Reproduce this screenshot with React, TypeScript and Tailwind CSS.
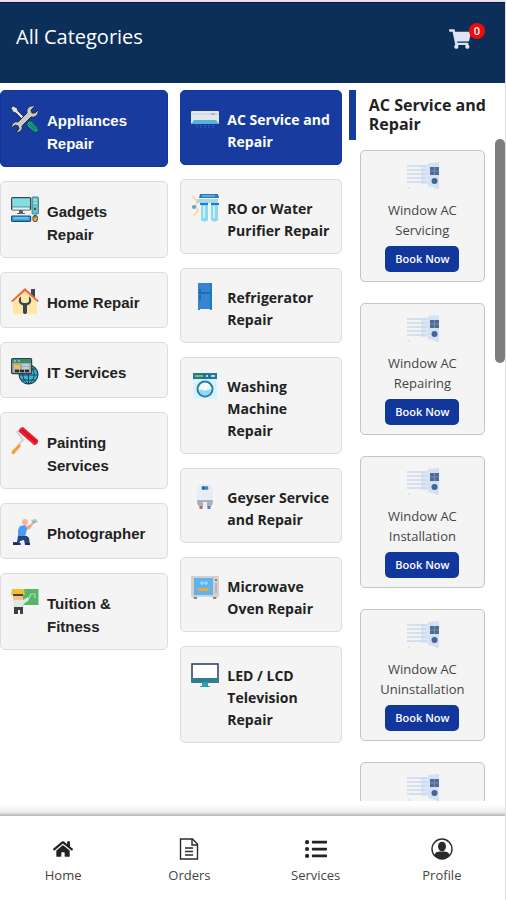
import React, { useState } from 'react';
import { FaHome, FaListUl, FaShoppingCart } from 'react-icons/fa';

interface Category {
    id: string;
    name: string;
    icon: React.ReactNode;
}

const iconClass = 'w-7 h-7 shrink-0';

const ToolsIcon = () => (
    <svg viewBox="0 0 28 28" className={iconClass} aria-hidden="true">
        <path d="M2 1l4 2 1 3 10 10-2 2L5 8 2 7 0 3z" fill="#dfe3e8" stroke="#222c3c" strokeWidth="0.8" />
        <path d="M16 18l2-2 3 0 6 7c1 3-1 5-4 4l-7-6z" fill="#149c86" stroke="#123d4c" strokeWidth="0.8" />
        <path d="M19 19l5 6M21 18l5 6" stroke="#0b5d5c" strokeWidth="0.8" />
        <path d="M24 1l-4 4 1 3 3 0 3-3c1 4-2 8-7 7L11 21c1 4-2 7-6 6l3-3-1-3-3-1-3 3c-1-4 2-7 6-6l9-9c-1-5 3-8 8-7z" fill="#c9c9cc" stroke="#222c3c" strokeWidth="1" />
    </svg>
);

const ComputerIcon = () => (
    <svg viewBox="0 0 28 28" className={iconClass} aria-hidden="true">
        <rect x="0.6" y="1.6" width="19" height="12" rx="1" fill="#7fe0e2" stroke="#344955" strokeWidth="1.2" />
        <path d="M1 11h18v3H1z" fill="#e7f2f4" stroke="#344955" strokeWidth="0.6" />
        <path d="M8 14h4v3h2v1H6v-1h2z" fill="#54656f" />
        <rect x="21" y="1" width="6.4" height="17" rx="0.8" fill="#64c5ca" stroke="#4b6c75" strokeWidth="0.9" />
        <path d="M22.5 4h3.5M22.5 7h3.5" stroke="#d6fbfb" strokeWidth="1.2" />
        <circle cx="24" cy="13" r="1.2" fill="#28566a" />
        <rect x="0.6" y="20" width="19" height="5.4" rx="0.8" fill="#36a9e8" stroke="#244966" strokeWidth="1.2" />
        <path d="M3 22h14" stroke="#8fd6fb" strokeWidth="1" />
        <ellipse cx="24.2" cy="22.5" rx="2.4" ry="3.2" fill="#efb321" stroke="#38424c" strokeWidth="1" />
        <path d="M24 19v3" stroke="#38424c" strokeWidth="1" />
    </svg>
);

const HouseIcon = () => (
    <svg viewBox="0 0 28 28" className={iconClass} aria-hidden="true">
        <path d="M20 2h4v10l-4-4z" fill="#3b4654" />
        <path d="M14 2L2 13v14h24V13z" fill="#ffe6a2" />
        <path d="M0 14L14 1l14 13-1.5 1L14 4 1.5 15z" fill="#f2643d" />
        <path d="M10 9.500c-3 2-3 6 0 8l2 1v7c1 2 3 2 4 0v-7l2-1c3-2 3-6 0-8v5l-2 1.500h-4l-2-1.500z" fill="#36475a" />
    </svg>
);

const WebIcon = () => (
    <svg viewBox="0 0 28 28" className={iconClass} aria-hidden="true">
        <circle cx="17.5" cy="17.5" r="9.4" fill="#35b5da" stroke="#213b4d" strokeWidth="1.2" />
        <path d="M8 18h19M10 23h15M17.5 8v19M17 8c-7 6-7 13 0 19M18 8c7 6 7 13 0 19M11 12h14" fill="none" stroke="#203e51" strokeWidth="1" />
        <rect x="0.6" y="1.6" width="20" height="15" rx="1" fill="#9fa9ad" stroke="#333d43" strokeWidth="1.2" />
        <path d="M1 2h19v4H1z" fill="#358f6f" />
        <path d="M3 4h2M7 4h2" stroke="#d5eee4" strokeWidth="1" />
        <path d="M3 8h6v4H3z" fill="#f4bd3a" />
        <path d="M11 8h7M11 11h7" stroke="#edf1f2" strokeWidth="1.2" />
        <path d="M4 14h14" stroke="#222d34" strokeWidth="2.6" strokeDasharray="4 1" />
    </svg>
);

const RollerIcon = () => (
    <svg viewBox="0 0 28 28" className={iconClass} aria-hidden="true">
        <path d="M10 2L6 5l6 8-5 5" fill="none" stroke="#c9cdd2" strokeWidth="1.6" />
        <path d="M8 17l2 2-7 8c-2 1-3-1-2-3z" fill="#f2a02b" />
        <path d="M12 0l15 13c1 2-2 6-4 5L8 5c-1-2 2-5 4-5z" fill="#ef1f2d" />
        <path d="M11 3l14 12" stroke="#c90f21" strokeWidth="1.5" />
    </svg>
);

const PhotographerIcon = () => (
    <svg viewBox="0 0 28 28" className={iconClass} aria-hidden="true">
        <circle cx="14" cy="4" r="3" fill="#f6b49c" />
        <path d="M14 8l5-1 3-4 1 2-4 6-5 1z" fill="#f3a58c" />
        <path d="M20 2l5-1 2 3-5 2z" fill="#adc5cd" />
        <path d="M22 3l2 2" stroke="#5ea6a0" strokeWidth="1" />
        <path d="M9 8l5-1 2 4-2 8H7V12z" fill="#4c9df0" />
        <path d="M7 18h9l2 2 1 7h-5l-1-5-4 1-1 4H2v-3h4z" fill="#25437f" />
        <path d="M2 26h8M15 26h4" stroke="#13284f" strokeWidth="1.5" />
    </svg>
);

const TeacherIcon = () => (
    <svg viewBox="0 0 28 28" className={iconClass} aria-hidden="true">
        <rect x="12" y="1" width="15.5" height="16" fill="#58b66c" />
        <path d="M16 14l4-8M20 6h4v4" fill="none" stroke="#a8e2ad" strokeWidth="1.2" />
        <path d="M1 1h12l1 6H0z" fill="#f3bf2c" />
        <path d="M2 6h10v5l-3 3H5l-3-3z" fill="#f3bd95" />
        <path d="M2 7h10" stroke="#3a3540" strokeWidth="1.8" />
        <path d="M2 12h10l5-3 1 2-6 6v3H3z" fill="#dce9dd" />
        <path d="M3 19h9v7H9v-4H7v4H3z" fill="#403d45" />
    </svg>
);

const AirConditionerIcon = () => (
    <svg viewBox="0 0 28 28" className={iconClass} aria-hidden="true">
        <rect x="0" y="6" width="28" height="13" rx="1" fill="#e2e7ea" />
        <path d="M0 9h28" stroke="#c0cbd1" strokeWidth="0.8" />
        <path d="M20 9h4" stroke="#8599a3" strokeWidth="1" />
        <path d="M3 15h22l3 4H0z" fill="#55b4dc" />
        <path d="M6 20v3M10 20v3M14 20v3M18 20v3M22 20v3" stroke="#3878cd" strokeWidth="1.2" strokeDasharray="1.2 1" />
    </svg>
);

const PurifierIcon = () => (
    <svg viewBox="0 0 28 28" className={iconClass} aria-hidden="true">
        <path d="M1 2l5 5-1 5 2 5-5 5" fill="none" stroke="#ffd8a2" strokeWidth="2" />
        <circle cx="3" cy="13" r="2" fill="#5b9fd2" />
        <path d="M9 0h18l1 4H8z" fill="#2c7bbb" />
        <path d="M11 2h13" stroke="#97d6f2" strokeWidth="1" />
        <path d="M6 5h21v4H6z" fill="#a9d9ef" />
        <path d="M10 8h7v18c-2 2-5 2-7 0zM20 8h7v18c-2 2-5 2-7 0z" fill="#8cd8ee" />
        <path d="M9 10h8M20 10h8" stroke="#2c7bbb" strokeWidth="2" />
        <path d="M13 12v12M23 12v12" stroke="#c6f3fb" strokeWidth="2" />
    </svg>
);

const FridgeIcon = () => (
    <svg viewBox="0 0 28 28" className={iconClass} aria-hidden="true">
        <path d="M7 0h14v27h-2v-1H9v1H7z" fill="#3486cf" />
        <path d="M7 10h14" stroke="#195b9d" strokeWidth="1.2" />
        <path d="M9 6v3M9 12v5" stroke="#1a5da0" strokeWidth="1.2" />
        <path d="M20 0v26" stroke="#2275bd" strokeWidth="1.5" />
    </svg>
);

const WasherIcon = () => (
    <svg viewBox="0 0 28 28" className={iconClass} aria-hidden="true">
        <path d="M2 1h24v26H2z" fill="#d7f2fc" />
        <path d="M2 1h24v6H2z" fill="#28739a" />
        <path d="M4 3h8v2H4z" fill="#73c84d" />
        <path d="M15 4h2M20 4h4" stroke="#a4dff5" strokeWidth="2" />
        <circle cx="14" cy="17" r="7.5" fill="#f2fcff" stroke="#247da7" strokeWidth="2" />
        <path d="M8 18c3-2 5 2 8 0 2-1 3-1 4 0-1 7-11 7-12 0z" fill="#8edbf2" />
    </svg>
);

const GeyserIcon = () => (
    <svg viewBox="0 0 28 28" className={iconClass} aria-hidden="true">
        <path d="M6 4c0-4 16-4 16 0v14H6z" fill="#e7edf2" />
        <circle cx="12.5" cy="5" r="2" fill="#2865b5" />
        <circle cx="15.5" cy="5" r="2" fill="#4386cf" />
        <path d="M6 17h16c0 5-2 7-4 7h-8c-2 0-4-2-4-7z" fill="#a8b1b8" />
        <path d="M12 19h4v6h-4z" fill="#eceff1" />
        <path d="M10 23v3" stroke="#db5961" strokeWidth="3" />
        <path d="M18 23v3" stroke="#3e83cb" strokeWidth="3" />
    </svg>
);

const MicrowaveIcon = () => (
    <svg viewBox="0 0 28 28" className={iconClass} aria-hidden="true">
        <path d="M2 24h4v3H3zM22 24h4l-1 3h-3z" fill="#80858c" />
        <rect x="0" y="4" width="28" height="21" rx="1" fill="#d6cfce" />
        <rect x="3" y="6" width="19" height="17" fill="#5db4f0" />
        <path d="M9 11h8M11 9v4M15 9v4" stroke="#98d8fb" strokeWidth="1.5" />
        <path d="M6 16h13l-2 3H8z" fill="#eba63e" />
        <circle cx="25" cy="8" r="1" fill="#815e56" />
        <path d="M25 11v10" stroke="#aa9794" strokeWidth="1" />
    </svg>
);

const TelevisionIcon = () => (
    <svg viewBox="0 0 28 28" className={iconClass} aria-hidden="true">
        <rect x="1" y="3" width="26" height="18" fill="#fff" stroke="#35466b" strokeWidth="1.6" />
        <path d="M0 17h28v4H0z" fill="#2a7f91" />
        <path d="M11 21h6v4h2v1H9v-1h2z" fill="#2ba2aa" />
    </svg>
);

const WindowAcIcon = () => (
    <svg viewBox="0 0 34 28" className="w-[34px] h-7 ml-1" aria-hidden="true">
        <path d="M14 3h8v19h-8z" fill="#dce6f5" />
        <path d="M0 4h20M0 8h20M0 12h20M0 16h20M0 20h20" stroke="#ccd8eb" strokeWidth="1.6" />
        <path d="M21 1l11-1v27l-11-3z" fill="#d3e1f3" />
        <path d="M23 5h9v8h-9z" fill="#4f6b97" />
        <path d="M23 9h9M27.5 5v8" stroke="#7e98bb" strokeWidth="0.8" />
        <circle cx="27.5" cy="19" r="3" fill="#416594" />
        <path d="M1 26h2M29 26h2" stroke="#c8d5e8" strokeWidth="1" />
    </svg>
);

const OrdersIcon = () => (
    <svg viewBox="0 0 24 24" className="w-6 h-6" fill="none" stroke="#2b2b2b" strokeWidth="1.4" aria-hidden="true">
        <path d="M3.5 2h12l5 5v15h-17z" />
        <path d="M15 2v6h5.5M8 11h8M8 14.5h8M8 18h8" />
    </svg>
);

const ProfileIcon = () => (
    <svg viewBox="0 0 24 24" className="w-6 h-6" aria-hidden="true">
        <circle cx="12" cy="12" r="10" fill="#fff" stroke="#2b2b2b" strokeWidth="1.4" />
        <path d="M4.500 18.500c0-3 3-3.700 5-4h5c2 .3 5 1 5 4-4 4.500-11 4.500-15 0z" fill="#2b2b2b" />
        <ellipse cx="12" cy="9.5" rx="4" ry="4.8" fill="#2b2b2b" />
    </svg>
);

const categories: Category[] = [
    { id: 'appliances', name: 'Appliances Repair', icon: <ToolsIcon /> },
    { id: 'gadgets', name: 'Gadgets Repair', icon: <ComputerIcon /> },
    { id: 'home', name: 'Home Repair', icon: <HouseIcon /> },
    { id: 'it', name: 'IT Services', icon: <WebIcon /> },
    { id: 'painting', name: 'Painting Services', icon: <RollerIcon /> },
    { id: 'photographer', name: 'Photographer', icon: <PhotographerIcon /> },
    { id: 'tuition', name: 'Tuition & Fitness', icon: <TeacherIcon /> }
];

const subCategories: Category[] = [
    { id: 'ac', name: 'AC Service and Repair', icon: <AirConditionerIcon /> },
    { id: 'ro', name: 'RO or Water Purifier Repair', icon: <PurifierIcon /> },
    { id: 'fridge', name: 'Refrigerator Repair', icon: <FridgeIcon /> },
    { id: 'washing', name: 'Washing Machine Repair', icon: <WasherIcon /> },
    { id: 'geyser', name: 'Geyser Service and Repair', icon: <GeyserIcon /> },
    { id: 'microwave', name: 'Microwave Oven Repair', icon: <MicrowaveIcon /> },
    { id: 'tv', name: 'LED / LCD Television Repair', icon: <TelevisionIcon /> }
];

const services = [
    'Window AC Servicing',
    'Window AC Repairing',
    'Window AC Installation',
    'Window AC Uninstallation'
];

const navItems = [
    { label: 'Home', icon: <FaHome className="w-5 h-5" /> },
    { label: 'Orders', icon: <OrdersIcon /> },
    { label: 'Services', icon: <FaListUl className="w-[22px] h-[22px]" /> },
    { label: 'Profile', icon: <ProfileIcon /> }
];

const activeCard = 'bg-[#173b9f] border-[#1233a0] text-white';
const idleCard = 'bg-[#f4f4f4] border-[#dcdcdc] text-[#222]';
const serviceCard = 'flex flex-col items-center h-[132px] shrink-0 pt-[11px] px-4 border border-[#c4c4c4] rounded-[5px] bg-[#f4f4f4]';

const App = () => {
    const [category, setCategory] = useState('appliances');
    const [subCategory, setSubCategory] = useState('ac');

    return (
        <div className="flex flex-col h-screen overflow-hidden bg-white border-t-2 border-r border-t-[#e4e4e8] border-r-[#dedee2] font-['Open_Sans',sans-serif]">
            {/* Header */}
            <header className="flex items-start justify-between h-[81px] shrink-0 pl-4 pr-[34px] pt-5 bg-[#0b2f59] border-t border-t-[#08104a] text-white">
                <h1 className="text-xl leading-7 font-medium">All Categories</h1>
                <button className="relative mt-1.5" aria-label="Cart">
                    <FaShoppingCart className="w-[22px] h-5 text-[#dfe3f2]" />
                    <span className="absolute -top-1.5 left-5 flex items-center justify-center w-4 h-4 rounded-full bg-[#f5070c] text-[11px] leading-4 font-semibold">0</span>
                </button>
            </header>

            <main className="relative flex-1 min-h-0 grid grid-cols-[33fr_34fr_32fr] overflow-hidden pt-[7px]">
                {/* Categories */}
                <div className="flex flex-col gap-3.5">
                    {categories.map(item => (
                        <button
                            key={item.id}
                            onClick={() => setCategory(item.id)}
                            className={`flex items-start gap-2 min-h-14 shrink-0 pt-3.5 pb-[11px] pl-2.5 pr-4 border rounded-[5px] text-left ${category === item.id ? activeCard : idleCard}`}
                        >
                            {item.icon}
                            <span className="mt-1 font-['Liberation_Sans',sans-serif] text-[15px] leading-[23px] font-bold">{item.name}</span>
                        </button>
                    ))}
                </div>

                {/* Sub categories */}
                <div className="flex flex-col gap-3.5 pl-3">
                    {subCategories.map(item => (
                        <button
                            key={item.id}
                            onClick={() => setSubCategory(item.id)}
                            className={`flex items-start gap-2 shrink-0 pt-3.5 pb-[11px] pl-2.5 pr-2 border rounded-[5px] text-left ${subCategory === item.id ? activeCard : idleCard}`}
                        >
                            {item.icon}
                            <span className="mt-1 text-sm leading-[22px] font-bold">{item.name}</span>
                        </button>
                    ))}
                </div>

                {/* Services */}
                <div className="pl-[7px]">
                    <h2 className="h-[50px] pl-[13px] pt-1.5 border-l-[7px] border-[#173b9f] text-base leading-[19px] font-bold text-[#222]">
                        AC Service and Repair
                    </h2>
                    <div className="flex flex-col gap-[21px] pt-2.5 pl-[11px] pr-5">
                        {services.map(name => (
                            <article key={name} className={serviceCard}>
                                <WindowAcIcon />
                                <h3 className="mt-2.5 text-center text-[13px] leading-5 text-[#444]">{name}</h3>
                                <button className="mt-1.5 w-[74px] h-[26px] shrink-0 rounded-[5px] bg-[#11369c] text-[11px] font-semibold text-white">Book Now</button>
                            </article>
                        ))}
                        <div className={serviceCard}>
                            <WindowAcIcon />
                        </div>
                    </div>
                </div>
                <div className="absolute right-0 top-14 w-2.5 h-56 rounded-full bg-[#7d7d7d]" />
            </main>

            {/* Bottom navigation */}
            <div className="h-[15px] shrink-0 bg-linear-to-b from-white from-20% via-[#ededed] via-75% to-[#b5b5b5]" />
            <nav className="grid grid-cols-4 h-[84px] shrink-0 bg-white">
                {navItems.map(item => (
                    <a key={item.label} href="#" className="flex flex-col items-center pt-[21px] text-[13px] leading-5 text-[#444]">
                        <span className="flex items-center h-6 mb-1 text-[#222]">{item.icon}</span>
                        {item.label}
                    </a>
                ))}
            </nav>
        </div>
    );
};

export default App;
